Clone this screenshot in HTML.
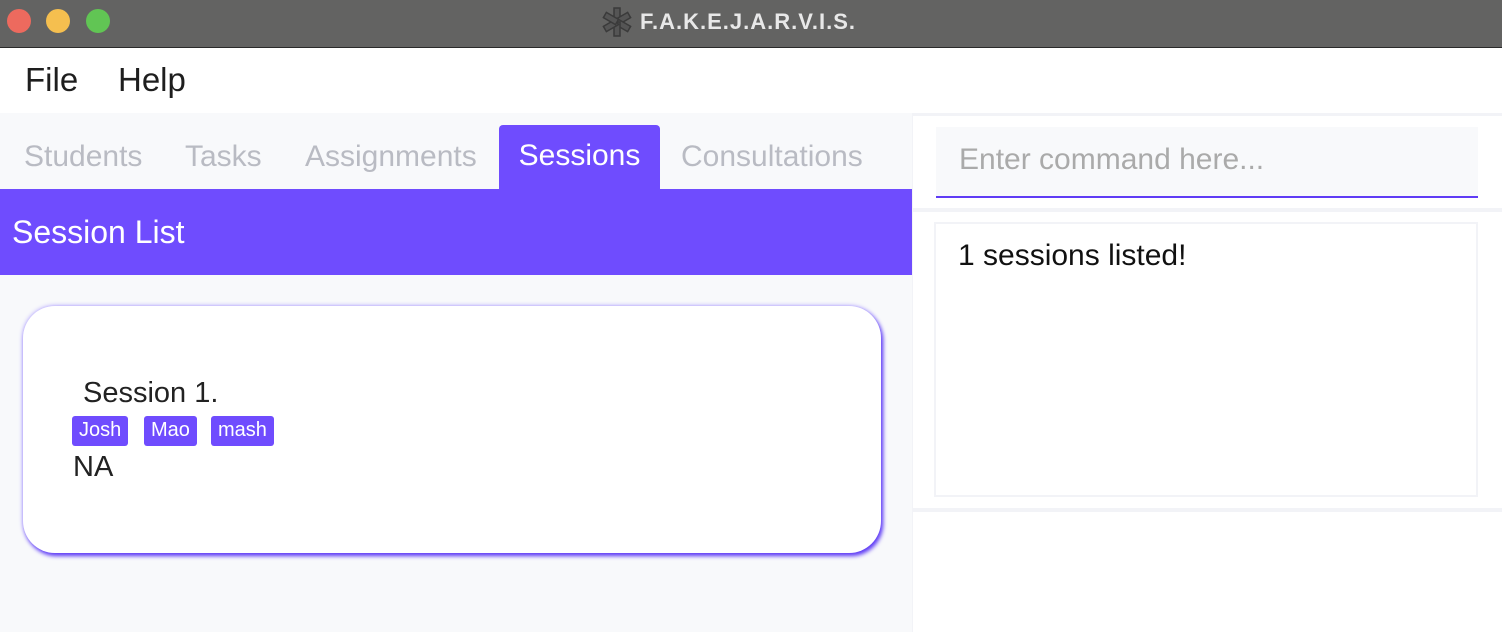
<!DOCTYPE html>
<html><head><meta charset="utf-8"><style>
*{margin:0;padding:0;box-sizing:border-box}
body{width:1502px;height:632px;overflow:hidden;font-family:"Liberation Sans",sans-serif;background:#fff;position:relative}
.abs{position:absolute}
.title{left:0;top:0;width:1502px;height:48px;background:#636362;border-bottom:1px solid #2a2a2a}
.dot{top:9px;width:24px;height:24px;border-radius:50%}
.ttl{left:640px;top:9px;font-size:22px;font-weight:bold;color:#e8e8e8;letter-spacing:1px}
.menu{left:0;top:49px;width:1502px;height:64px;background:#fff;font-size:33px;color:#1e1e1e}
.left{left:0;top:113px;width:912px;height:519px;background:#f8f9fb}
.tab{top:140px;font-size:30px;color:#b9bbc3}
.seltab{left:499px;top:125px;width:161px;height:64px;background:#6f4cfe;border-radius:4px 4px 0 0;color:#fff;font-size:30px;text-align:center;padding-top:14px}
.hdr{left:0;top:189px;width:912px;height:86px;background:#6f4cfe;color:#fff;font-size:32px;padding:25px 0 0 12px}
.card{left:23px;top:306px;width:858px;height:247px;background:#fff;border-radius:32px;box-shadow:2px 3px 4px #5f3cf5,0 0 5px #a898ff}
.tag{top:416px;height:30px;background:#6f4cfe;color:#fff;font-size:20px;border-radius:3px;padding:3px 7px 0}
.right{left:912px;top:113px;width:590px;height:519px;background:#f2f3f7}
</style></head><body>
<div class="abs title"></div>
<div class="abs dot" style="left:7px;background:#ed6a5e"></div>
<div class="abs dot" style="left:46px;background:#f5bf4f"></div>
<div class="abs dot" style="left:86px;background:#61c554"></div>
<svg class="abs" style="left:600px;top:5px" width="34" height="34" viewBox="0 0 34 34"><g fill="#555" stroke="#3a3a3a" stroke-width="1.5"><g transform="translate(17 17)"><rect x="-3" y="-14" width="6" height="14" transform="rotate(0)"/><rect x="-3" y="-14" width="6" height="14" transform="rotate(60)"/><rect x="-3" y="-14" width="6" height="14" transform="rotate(120)"/><rect x="-3" y="-14" width="6" height="14" transform="rotate(180)"/><rect x="-3" y="-14" width="6" height="14" transform="rotate(240)"/><rect x="-3" y="-14" width="6" height="14" transform="rotate(300)"/></g></g></svg>
<div class="abs ttl">F.A.K.E.J.A.R.V.I.S.</div>
<div class="abs menu"><span class="abs" style="left:25px;top:12px">File</span><span class="abs" style="left:118px;top:12px">Help</span></div>
<div class="abs left"></div>
<div class="abs tab" style="left:24px">Students</div>
<div class="abs tab" style="left:185px">Tasks</div>
<div class="abs tab" style="left:305px">Assignments</div>
<div class="abs seltab">Sessions</div>
<div class="abs tab" style="left:681px">Consultations</div>
<div class="abs hdr">Session List</div>
<div class="abs card"></div>
<div class="abs" style="left:83px;top:377px;font-size:29px;color:#222">Session 1.</div>
<div class="abs tag" style="left:72px">Josh</div>
<div class="abs tag" style="left:144px">Mao</div>
<div class="abs tag" style="left:211px">mash</div>
<div class="abs" style="left:73px;top:451px;font-size:29px;color:#222">NA</div>
<div class="abs right"></div>
<div class="abs" style="left:913px;top:116px;width:589px;height:92px;background:#fff"></div>
<div class="abs" style="left:936px;top:127px;width:542px;height:71px;background:#f8f9fb;border-bottom:2px solid #5f3cf5"></div>
<div class="abs" style="left:959px;top:143px;font-size:30px;color:#aaaaaa">Enter command here...</div>
<div class="abs" style="left:913px;top:212px;width:589px;height:296px;background:#fff"></div>
<div class="abs" style="left:934px;top:222px;width:544px;height:275px;border:2px solid #f2f3f7;background:#fff"></div>
<div class="abs" style="left:958px;top:239px;font-size:30px;color:#111">1 sessions listed!</div>
<div class="abs" style="left:913px;top:512px;width:589px;height:120px;background:#fff"></div>
</body></html>
